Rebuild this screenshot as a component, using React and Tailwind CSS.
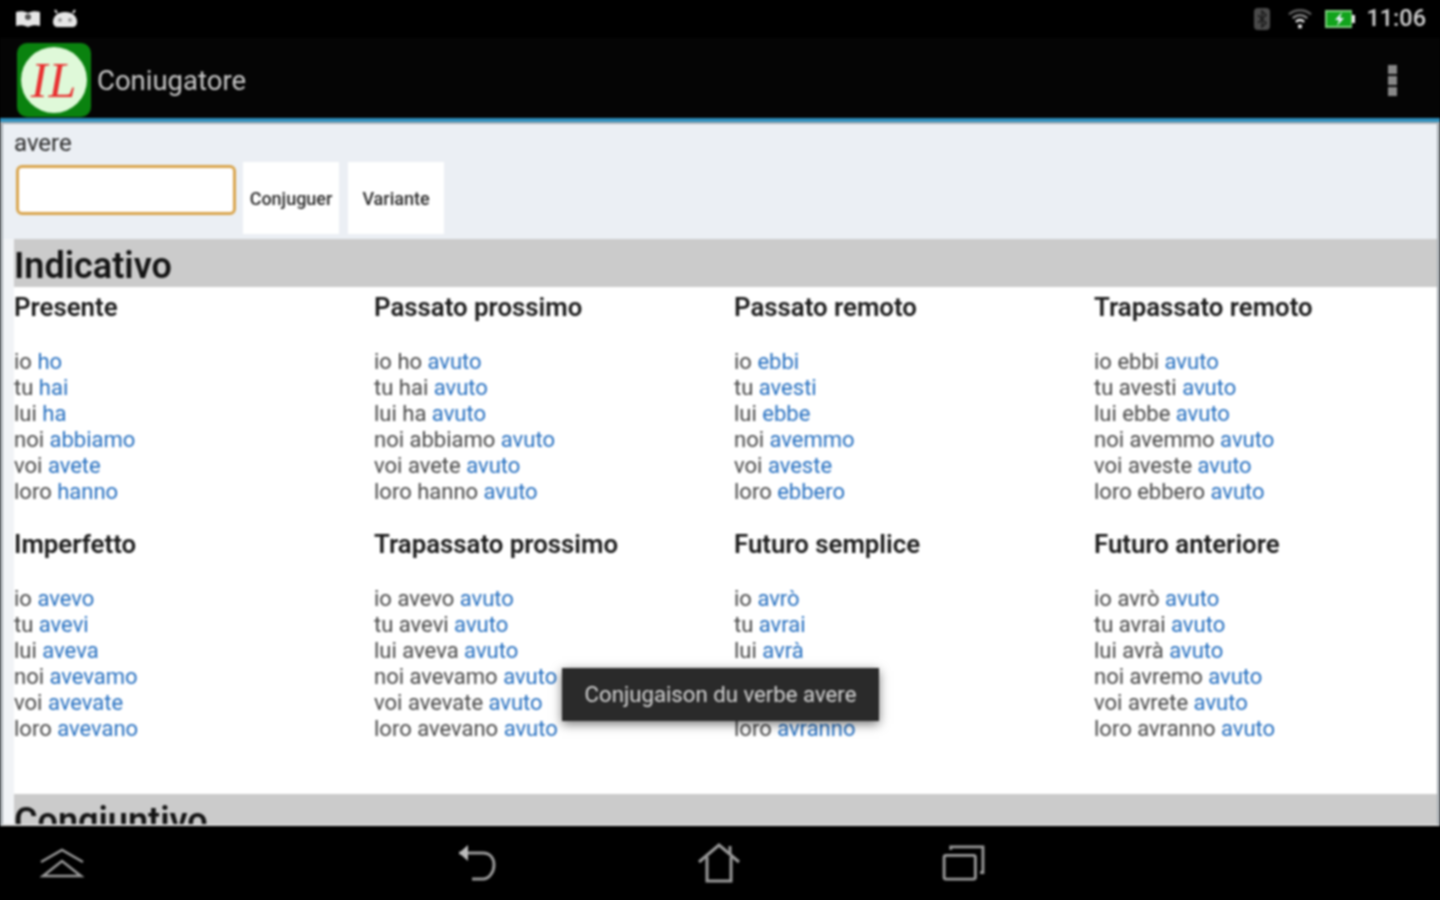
const P = ["io", "tu", "lui", "noi", "voi", "loro"];

const Tense = ({ title, forms, aux }) => (
  <div className="h-[237px]">
    <div className="text-[25.8px] leading-[36px] pt-[2px] font-semibold text-[#1c1c1c] h-[62px]">{title}</div>
    {forms.map((f, i) => (
      <div key={i} className="h-[26px] leading-[26px] whitespace-nowrap">
        <span className="text-[#484848]">{P[i]} {aux ? `${f} ` : ""}</span>
        {!aux && " "}
        <span className="text-[#256fc0]">{aux ? "avuto" : f}</span>
      </div>
    ))}
  </div>
);

const tenses = [
  ["Presente", ["ho", "hai", "ha", "abbiamo", "avete", "hanno"], false],
  ["Passato prossimo", ["ho", "hai", "ha", "abbiamo", "avete", "hanno"], true],
  ["Passato remoto", ["ebbi", "avesti", "ebbe", "avemmo", "aveste", "ebbero"], false],
  ["Trapassato remoto", ["ebbi", "avesti", "ebbe", "avemmo", "aveste", "ebbero"], true],
  ["Imperfetto", ["avevo", "avevi", "aveva", "avevamo", "avevate", "avevano"], false],
  ["Trapassato prossimo", ["avevo", "avevi", "aveva", "avevamo", "avevate", "avevano"], true],
  ["Futuro semplice", ["avrò", "avrai", "avrà", "avremo", "avrete", "avranno"], false],
  ["Futuro anteriore", ["avrò", "avrai", "avrà", "avremo", "avrete", "avranno"], true],
];

const Logo = () => (
  <div className="w-[74px] h-[74px] rounded-[10px] bg-[#0a820f] flex items-center justify-center">
    <div className="w-[66px] h-[66px] rounded-full bg-[#dff9d9] flex items-center justify-center">
      <span className="text-[#e83030] text-[50px] leading-none italic font-['Liberation_Serif',serif] tracking-[1px]">IL</span>
    </div>
  </div>
);

const StatusLeft = () => (
  <div className="flex items-center gap-[11px]">
    <svg width="26" height="18" viewBox="0 0 26 18"><path d="M1 2c4-1 8-1 12 1 4-2 8-2 12-1v14c-4-1-8-1-12 1-4-2-8-2-12-1z" fill="#e6e6e6" /><circle cx="13" cy="7" r="3" fill="#555" /></svg>
    <svg width="26" height="20" viewBox="0 0 26 20"><path d="M1 13c0-6 5-10 12-10s12 4 12 10c0 3-2 5-5 5H6c-3 0-5-2-5-5z" fill="#e6e6e6" /><circle cx="8" cy="11" r="2" fill="#999" /><circle cx="18" cy="11" r="2" fill="#999" /><path d="M5 4L3 1M21 4l2-3" stroke="#e6e6e6" strokeWidth="2" /></svg>
  </div>
);

const StatusRight = () => (
  <div className="flex items-center">
    <svg width="18" height="24" viewBox="0 0 18 24" className="mr-[17px]"><rect x="1" y="1" width="16" height="22" rx="4" fill="#4a4a4a" /><path d="M5 8l8 8-4 4V4l4 4-8 8" fill="none" stroke="#1c1c1c" strokeWidth="1.500" /></svg>
    <svg width="24" height="22" viewBox="0 0 26 22" className="mr-[13px]"><path d="M1 6c7-6 17-6 24 0" fill="none" stroke="#5a5a5a" strokeWidth="2.500" /><path d="M5 10c5-4 11-4 16 0" fill="none" stroke="#8a8a8a" strokeWidth="2.500" /><path d="M8.500 14c3-2.500 6-2.500 9 0" fill="none" stroke="#eee" strokeWidth="2.500" /><rect x="11" y="17" width="4" height="4" fill="#eee" /></svg>
    <svg width="30" height="20" viewBox="0 0 30 20" className="mr-[11px]"><rect x="0" y="1" width="27" height="18" fill="#7fd07f" /><rect x="2" y="3" width="24" height="14" fill="#12a31c" /><rect x="27" y="6" width="3" height="8" fill="#eee" /><path d="M17 3l-7 8h4l-2 6 7-8h-4z" fill="#eef" /></svg>
    <span className="text-[23.5px] font-medium text-[#d2d2d2] leading-none">11:06</span>
  </div>
);

export default function App() {
  return (
    <div className="w-[1440px] h-[900px] overflow-hidden bg-black">
      <div className="w-[1440px] h-[900px] overflow-hidden relative flex flex-col bg-black font-['Roboto',sans-serif] blur-[0.8px]">
        <div className="h-[38px] shrink-0 flex items-center justify-between pl-[15px] pr-[14px]">
          <StatusLeft />
          <StatusRight />
        </div>
        <div className="h-[80px] shrink-0 bg-[#050505] flex items-center justify-between pl-[17px] pr-[43px] pt-[4px]">
          <div className="flex items-center gap-[6px]">
            <Logo />
            <span className="text-[27.5px] text-[#c8c8c8] leading-none pt-[2px]">Coniugatore</span>
          </div>
          <div className="flex flex-col gap-[2px]">
            <div className="w-[9px] h-[9px] bg-[#888]" />
            <div className="w-[9px] h-[9px] bg-[#888]" />
            <div className="w-[9px] h-[9px] bg-[#888]" />
          </div>
        </div>
        <div className="h-[4px] shrink-0 bg-[#2e8fbd]" />
        <div className="h-[704px] shrink-0 border-l-[3px] border-r-[3px] border-t-[2px] border-b-[2px] border-[#aab0b5] border-b-[#d9d9d9] bg-[#f1f3f6] overflow-hidden text-[22px]">
          <div className="bg-[#ebeff4] h-[115px] pl-[11px]">
            <div className="text-[24px] leading-[36px] pt-[1px] text-[#2a2a2a]">avere</div>
            <div className="flex items-start gap-[7px] pl-[2px] pt-[1px]">
              <div className="w-[220px] h-[50px] mt-[3px] rounded-[6px] bg-white border-[3px] border-[#d9a54e]" />
              <div className="w-[96px] h-[72px] bg-white text-[18px] font-medium text-[#2a2a2a] flex items-center justify-center">Conjuguer</div>
              <div className="w-[96px] h-[72px] ml-[2px] bg-white text-[18px] font-medium text-[#2a2a2a] flex items-center justify-center">Variante</div>
            </div>
          </div>
          <div className="ml-[11px]">
            <div className="h-[48px] bg-[#cbcbcb] text-[36px] leading-[54px] font-semibold text-[#141414]">Indicativo</div>
            <div className="bg-white grid grid-cols-[360px_360px_360px_360px]">
              {tenses.map(([t, f, a]) => <Tense key={t} title={t} forms={f} aux={a} />)}
              <div className="col-span-4 h-[33px]" />
            </div>
            <div className="h-[30px] bg-[#cbcbcb] text-[36px] leading-[54px] font-semibold text-[#141414] overflow-hidden">Congiuntivo</div>
          </div>
        </div>
        <div className="flex-1 flex items-center relative">
          <div className="w-[124px] flex justify-center">
            <svg width="46" height="30" viewBox="0 0 46 30" fill="none" stroke="#999" strokeWidth="2.500"><path d="M2 14L23 2l21 12" /><path d="M4 28L23 13l19 15z" /></svg>
          </div>
          <svg width="42" height="38" viewBox="0 0 42 38" fill="none" stroke="#999" strokeWidth="3" className="ml-[333px]"><path d="M2 9h24c7 0 11 5 11 12s-5 14-11 14H15" /><path d="M11 1L2 9l9 8z" fill="#bbb" stroke="none" /></svg>
          <svg width="44" height="40" viewBox="0 0 44 40" fill="none" stroke="#999" strokeWidth="3" className="ml-[198px]"><path d="M2 19L22 2l20 17" /><path d="M33 3v8" /><path d="M10 14v24h24V14" /></svg>
          <svg width="44" height="36" viewBox="0 0 46 38" fill="none" stroke="#999" strokeWidth="3" className="ml-[201px]"><rect x="2" y="11" width="33" height="25" rx="2" /><path d="M9 5V2h34v27h-3" /></svg>
        </div>
        <div className="absolute left-[562px] top-[668px] w-[317px] h-[53px] bg-[#2a2a2a] shadow-[0_3px_10px_rgba(0,0,0,0.55)] flex items-center justify-center text-[22.2px] text-[#d4d4d4]">
          Conjugaison du verbe avere
        </div>
      </div>
    </div>
  );
}
